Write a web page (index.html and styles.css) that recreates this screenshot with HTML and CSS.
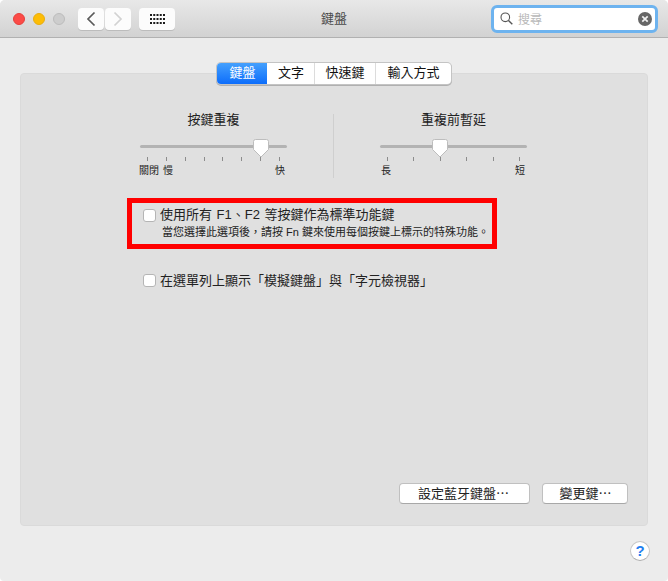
FILE: index.html
```html
<!DOCTYPE html>
<html lang="zh-Hant">
<head>
<meta charset="utf-8">
<title>鍵盤</title>
<link rel="stylesheet" href="styles.css">
</head>
<body>
<div class="window">
  <header class="titlebar">
    <div class="lights">
      <span class="light red"></span>
      <span class="light yellow"></span>
      <span class="light gray"></span>
    </div>
    <div class="nav">
      <button class="tool nav-btn" aria-label="上一頁"><svg width="10" height="16" viewBox="0 0 10 16"><path d="M8.500 1.500 2 8l6.500 6.500" fill="none" stroke="#5a5a5a" stroke-width="1.700"/></svg></button>
      <button class="tool nav-btn" aria-label="下一頁"><svg width="10" height="16" viewBox="0 0 10 16"><path d="M1.500 1.500 8 8l-6.500 6.500" fill="none" stroke="#d2d2d2" stroke-width="1.700"/></svg></button>
    </div>
    <button class="tool grid-btn" aria-label="顯示全部">
      <svg width="15" height="10" viewBox="0 0 15 10" fill="#1c1c1c">
        <rect x="0" y="0" width="2" height="2"/><rect x="3.250" y="0" width="2" height="2"/><rect x="6.500" y="0" width="2" height="2"/><rect x="9.750" y="0" width="2" height="2"/><rect x="13" y="0" width="2" height="2"/>
        <rect x="0" y="4" width="2" height="2"/><rect x="3.250" y="4" width="2" height="2"/><rect x="6.500" y="4" width="2" height="2"/><rect x="9.750" y="4" width="2" height="2"/><rect x="13" y="4" width="2" height="2"/>
        <rect x="0" y="8" width="2" height="2"/><rect x="3.250" y="8" width="2" height="2"/><rect x="6.500" y="8" width="2" height="2"/><rect x="9.750" y="8" width="2" height="2"/><rect x="13" y="8" width="2" height="2"/>
      </svg>
    </button>
    <h1 class="title">鍵盤</h1>
    <div class="search">
      <svg class="search-icon" width="13" height="13" viewBox="0 0 13 13"><circle cx="5.300" cy="5.300" r="4.300" fill="none" stroke="#555" stroke-width="1.100"/><path d="M8.500 8.500 12.300 12.300" stroke="#555" stroke-width="1.400"/></svg>
      <span class="search-text">搜尋</span>
      <svg class="search-clear" width="14" height="14" viewBox="0 0 14 14"><circle cx="7" cy="7" r="7" fill="#666"/><path d="M4.300 4.300l5.400 5.400M9.700 4.300l-5.400 5.400" stroke="#f2f2f2" stroke-width="1.700"/></svg>
    </div>
  </header>

  <main class="content">
    <nav class="tabs">
      <span class="tab tab-active tab-1">鍵盤</span>
      <span class="tab tab-2">文字</span>
      <span class="tab tab-3">快速鍵</span>
      <span class="tab tab-4">輸入方式</span>
    </nav>

    <section class="panel">
      <div class="sliders">
        <div class="slider-col">
          <div class="slider-title">按鍵重複</div>
          <div class="track"><svg class="thumb" style="left:113px" width="16" height="19" viewBox="0 0 16 19"><path d="M2.500.5h11a2 2 0 0 1 2 2v8L8 18 .5 10.500v-8a2 2 0 0 1 2-2z" fill="#fff" stroke="#bdbdbd"/></svg></div>
          <div class="ticks"><i></i><i></i><i></i><i></i><i></i><i></i><i></i><i></i></div>
          <div class="scale scale-left"><span>關閉</span><span class="slow">慢</span><span class="scale-end">快</span></div>
        </div>
        <div class="divider"></div>
        <div class="slider-col">
          <div class="slider-title">重複前暫延</div>
          <div class="track"><svg class="thumb" style="left:52px" width="16" height="19" viewBox="0 0 16 19"><path d="M2.500.5h11a2 2 0 0 1 2 2v8L8 18 .5 10.500v-8a2 2 0 0 1 2-2z" fill="#fff" stroke="#bdbdbd"/></svg></div>
          <div class="ticks"><i></i><i></i><i></i><i></i><i></i><i></i></div>
          <div class="scale scale-right"><span>長</span><span class="scale-end">短</span></div>
        </div>
      </div>

      <div class="highlight">
        <div class="check-row"><span class="checkbox"></span><span>使用所有 F1、F2 等按鍵作為標準功能鍵</span></div>
        <p class="hint">當您選擇此選項後，請按 Fn 鍵來使用每個按鍵上標示的特殊功能。</p>
      </div>

      <div class="check-row second"><span class="checkbox"></span><span>在選單列上顯示「模擬鍵盤」與「字元檢視器」</span></div>

      <div class="actions">
        <button class="btn btn-wide">設定藍牙鍵盤⋯</button>
        <button class="btn btn-narrow">變更鍵⋯</button>
      </div>
    </section>

    <div class="help-row"><button class="help" aria-label="說明">?</button></div>
  </main>
</div>
</body>
</html>
```

FILE: styles.css
```css
* { box-sizing: border-box; }
html, body { margin: 0; padding: 0; background: #fff; }
body {
  width: 668px;
  height: 581px;
  overflow: hidden;
  font-family: "Liberation Sans", "Noto Sans CJK TC", sans-serif;
  color: #222;
  font-size: 13px;
}
.window {
  width: 668px;
  height: 581px;
  background: #ececec;
  border-radius: 5px 5px 4px 4px;
  overflow: hidden;
  display: flex;
  flex-direction: column;
}
.titlebar {
  height: 38px;
  flex: none;
  display: flex;
  align-items: center;
  padding-left: 13px;
  background: linear-gradient(#e8e8e8, #d2d2d2);
  border-bottom: 1px solid #b1b1b1;
  position: relative;
}
.lights { display: flex; gap: 8px; }
.light { width: 12px; height: 12px; border-radius: 50%; }
.red { background: #fc4b47; border: 1px solid #e5403c; }
.yellow { background: #fdbd06; border: 1px solid #e8ad10; }
.gray { background: #cdcdcd; border: 1px solid #bcbcbc; }
.tool {
  background: #fcfcfc;
  border: 0;
  border-radius: 4px;
  box-shadow: 0 1px 0 #bcbcbc;
  height: 22px;
  padding: 0;
  display: flex;
  align-items: center;
  justify-content: center;
}
.nav { display: flex; gap: 1px; margin-left: 13px; }
.nav-btn { width: 26px; }
.grid-btn { width: 36px; margin-left: 8px; }
.title {
  position: absolute;
  left: 0;
  right: 0;
  top: 10px;
  margin: 0;
  text-align: center;
  font-size: 13px;
  line-height: 18px;
  font-weight: 400;
  color: #4a4a4a;
}
.search {
  width: 167px;
  height: 28px;
  margin-left: auto;
  margin-right: 10px;
  background: #fff;
  border: 3px solid #6db3ef;
  border-radius: 6px;
  display: flex;
  align-items: center;
  padding: 0 3px 0 6px;
}
.search-text { margin-left: 5px; font-size: 12px; color: #b9b9b9; }
.search-clear { margin-left: auto; }
.content {
  flex: 1;
  display: flex;
  flex-direction: column;
  padding: 25px 20px 0;
}
.tabs {
  display: flex;
  align-self: center;
  height: 21px;
  width: 234px;
  background: #fff;
  border-radius: 4px;
  box-shadow: 0 0 0 1px #c4c4c4, 0 1px 0 1px #b0b0b0;
  position: relative;
  z-index: 1;
  font-size: 13px;
  line-height: 20px;
  color: #111;
}
.tab { text-align: center; border-right: 1px solid #dcdcdc; }
.tab-1 { width: 50px; padding-left: 1px; }
.tab-2 { width: 48px; padding-left: 1px; }
.tab-3 { width: 61px; }
.tab-4 { width: 75px; border-right: 0; }
.tab-active {
  background: linear-gradient(#44a0fd, #0d6dfb);
  color: #fff;
  border-radius: 4px 0 0 4px;
  border-right: 0;
}
.panel {
  margin-top: -11px;
  height: 453px;
  background: #e0e0e0;
  border: 1px solid #dadada;
  border-radius: 4px;
  display: flex;
  flex-direction: column;
  padding-top: 38px;
}
.sliders {
  display: flex;
  gap: 46px;
  padding-left: 119px;
  height: 66px;
}
.slider-col { width: 147px; }
.slider-title { text-align: center; font-size: 13px; line-height: 16px; color: #222; }
.track {
  position: relative;
  height: 3px;
  margin-top: 17px;
  background: #b3b3b3;
  border-radius: 2px;
}
.thumb { position: absolute; top: -6px; }
.ticks {
  display: flex;
  justify-content: space-between;
  padding: 0 7px;
  margin-top: 9px;
}
.ticks i { display: block; width: 1px; height: 4px; background: #8c8c8c; }
.scale {
  display: flex;
  font-size: 10px;
  line-height: 14px;
  margin-top: 3px;
  color: #222;
}
.scale-left { margin-left: -1px; padding-right: 2px; }
.scale-right { padding: 0 2px 0 1px; }
.slow { margin-left: 4px; }
.scale-end { margin-left: auto; }
.divider { width: 1px; height: 64px; margin-top: 2px; background: #cfcfcf; }
.highlight {
  width: 370px;
  height: 51px;
  margin: 20px 0 0 106px;
  border: 5px solid #f00;
  padding: 4px 0 0 11px;
}
.check-row {
  display: flex;
  align-items: flex-start;
  gap: 4px;
  font-size: 13px;
  line-height: 16px;
  word-spacing: 1px;
  color: #222;
}
.checkbox {
  width: 13px;
  height: 13px;
  flex: none;
  margin-top: 2px;
  background: #fff;
  border: 1px solid #b5b5b5;
  border-radius: 3px;
}
.hint {
  margin: 2px 0 0 19px;
  font-size: 11px;
  line-height: 14px;
  white-space: nowrap;
  color: #222;
}
.second { margin: 24px 0 0 122px; }
.second .checkbox { margin-top: 1px; }
.actions {
  margin-top: auto;
  margin-bottom: 21px;
  padding-right: 19px;
  display: flex;
  justify-content: flex-end;
  gap: 12px;
}
.btn {
  height: 21px;
  padding: 0;
  background: #fff;
  border: 1px solid #c0c0c0;
  border-bottom-color: #a8a8a8;
  border-radius: 4px;
  font: inherit;
  font-size: 13px;
  line-height: 18px;
  color: #222;
}
.btn-wide { width: 131px; padding-right: 2px; }
.btn-narrow { width: 86px; padding-left: 1px; }
.help-row { display: flex; justify-content: flex-end; margin: 15px -2px 0 0; }
.help {
  width: 20px;
  height: 20px;
  padding: 0;
  background: #fff;
  border: 1px solid #c6c6c6;
  border-bottom-color: #adadad;
  border-radius: 50%;
  color: #1f7ef0;
  font: bold 15px/18px "Liberation Sans", sans-serif;
}
```
